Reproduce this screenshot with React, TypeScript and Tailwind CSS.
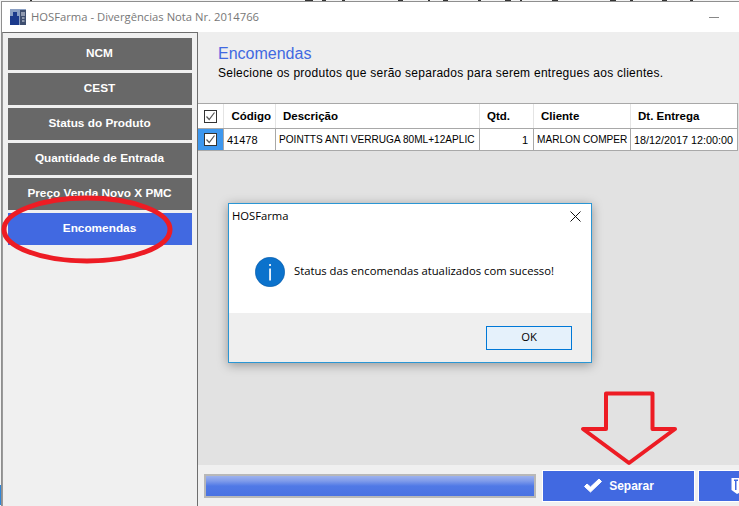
const sidebarItems = ['NCM', 'CEST', 'Status do Produto', 'Quantidade de Entrada', 'Preço Venda Novo X PMC']

function SmallCheck() {
  return (
    <div className="flex h-[13px] w-[13px] items-center justify-center border border-[#333] bg-white">
      <svg width="11" height="11" viewBox="0 0 11 11" fill="none">
        <path d="M1.5 5.5 4.2 8.5 9.5 1.5" stroke="#555" strokeWidth="1.2" />
      </svg>
    </div>
  )
}

function MessageDialog() {
  return (
    <div className="absolute left-[228px] top-[203px] flex h-[160px] w-[364px] flex-col border border-[#2a96d4] bg-white font-['Open_Sans',sans-serif] shadow-[0_2px_10px_rgba(0,0,0,0.35)]">
      <div className="flex h-[22px] items-center justify-between pl-[3px] pr-[10px] pt-[2px] text-[11.25px] text-black">
        <span>HOSFarma</span>
        <svg width="11" height="11" viewBox="0 0 11 11" fill="none">
          <path d="M0.5 0.5 10.5 10.5M10.5 0.5 0.5 10.5" stroke="#111" strokeWidth="1" />
        </svg>
      </div>
      <div className="flex h-[87px] items-center gap-[9px] pl-[26px] pt-[4px]">
        <svg width="30" height="30" viewBox="0 0 30 30">
          <circle cx="15" cy="15" r="14.7" fill="#0b72cc" stroke="#0a5ba6" strokeWidth="0.6" />
          <rect x="14.2" y="7" width="1.7" height="2" fill="#fff" />
          <rect x="14.2" y="11.5" width="1.7" height="12" fill="#fff" />
        </svg>
        <span className="text-[11.25px] text-black">Status das encomendas atualizados com sucesso!</span>
      </div>
      <div className="flex flex-1 items-center justify-end bg-[#efefef] pr-[19px]">
        <button className="h-[24px] w-[86px] border border-[#0078d7] bg-[#e5f1fb] text-[11.25px] text-black">OK</button>
      </div>
    </div>
  )
}

export default function App() {
  return (
    <div className="relative flex h-[506px] w-[739px] flex-col overflow-hidden bg-[#f4f4f4] font-['Liberation_Sans',sans-serif]">
      {/* bits of the window behind, top edge */}
      <svg className="shrink-0" width="739" height="1" viewBox="0 0 739 1">
        <path d="M30 0h2M305 0h8M322 0h4M342 0h3M398 0h5M428 0h2M443 0h5M478 0h3M505 0h6M520 0h2M552 0h6M610 0h6M630 0h3M662 0h5M690 0h3" stroke="#333" strokeWidth="2" />
      </svg>

      <div className="flex min-h-0 flex-1">
        <div className="flex w-px shrink-0 flex-col justify-end pb-px">
          <div className="h-[20px] bg-[#2f86d8]" />
        </div>

        <div className="flex min-w-0 flex-1 flex-col border-l border-t border-[#8f8f8f]">
          {/* title bar */}
          <div className="flex h-[30px] shrink-0 items-center justify-between bg-white pl-[8px] pr-[20px] font-['Open_Sans',sans-serif]">
            <div className="flex items-center gap-[5px]">
              <svg width="16" height="16" viewBox="0 0 16 16">
                <rect width="16" height="16" fill="#8ba0c4" />
                <path d="M0 7H3V3H7V7H9V16H0Z" fill="#1b3a8c" />
                <path d="M10 1H16V16H10Z" fill="#3f4f70" />
                <path d="M12 3V7M14 3V7M12 9H14.5M12 12H14.5" stroke="#e2e6ee" strokeWidth="1" />
              </svg>
              <span className="text-[11.25px] text-[#777]">HOSFarma - Divergências Nota Nr. 2014766</span>
            </div>
            <div className="h-px w-[10px] bg-[#888]" />
          </div>

          <div className="flex min-h-0 flex-1">
            {/* sidebar */}
            <div className="flex w-[196px] shrink-0 flex-col gap-[3px] border-l border-r border-t border-[#6e6e6e] border-l-[#9a9a9a] bg-[#f0f0f0] pl-[5px] pr-[5px] pt-[5px]">
              {sidebarItems.map((item) => (
                <div key={item} className="flex h-[32px] items-center justify-center pr-px bg-[#686868] text-[11.8px] font-bold text-white">
                  {item}
                </div>
              ))}
              <div className="flex h-[32px] items-center justify-center pr-px bg-[#4169e1] text-[11.8px] font-bold text-white">
                Encomendas
              </div>
            </div>

            {/* content */}
            <div className="flex min-w-0 flex-1 flex-col bg-[#e2e2e2]">
              <div className="h-[71px] shrink-0 bg-[#eeeeee] pl-[20px] pt-[12px]">
                <h1 className="text-[16px] leading-[19px] text-[#4169e1]">Encomendas</h1>
                <p className="mt-[1px] text-[12px] leading-[18px] tracking-[0.26px] text-black">
                  Selecione os produtos que serão separados para serem entregues aos clientes.
                </p>
              </div>

              <div className="mr-[1px] shrink-0 border-b border-r border-t border-[#a8a8a8] bg-white text-black">
                <div className="grid h-[25px] grid-cols-[26px_52px_204px_54px_97px_1fr] border-b border-[#a8a8a8] text-[11.5px] font-bold">
                  <div className="flex items-center justify-center border-r border-[#e4e4e4]">
                    <SmallCheck />
                  </div>
                  <div className="flex items-center justify-end border-r border-[#e4e4e4] pr-[4px] pt-px">Código</div>
                  <div className="flex items-center border-r border-[#e4e4e4] pl-[7px] pt-px">Descrição</div>
                  <div className="flex items-center border-r border-[#e4e4e4] pl-[7px] pt-px">Qtd.</div>
                  <div className="flex items-center border-r border-[#e4e4e4] pl-[7px] pt-px">Cliente</div>
                  <div className="flex items-center pl-[7px] pt-px">Dt. Entrega</div>
                </div>
                <div className="grid h-[21px] grid-cols-[26px_52px_204px_54px_97px_1fr] text-[10.1px]">
                  <div className="flex items-center justify-center border-r border-[#a8a8a8] bg-[#3d97ee]">
                    <SmallCheck />
                  </div>
                  <div className="flex items-center border-r border-[#a8a8a8] pl-[3px] pt-px text-[11px]">41478</div>
                  <div className="flex items-center whitespace-nowrap border-r border-[#a8a8a8] pl-[3px] pt-px">POINTTS ANTI VERRUGA 80ML+12APLIC</div>
                  <div className="flex items-center justify-end border-r border-[#a8a8a8] pr-[5px] pt-px text-[11px]">1</div>
                  <div className="flex items-center whitespace-nowrap border-r border-[#a8a8a8] pl-[3px] pt-px">MARLON COMPER</div>
                  <div className="flex items-center whitespace-nowrap pl-[3px] pt-px text-[10.8px]">18/12/2017 12:00:00</div>
                </div>
              </div>

              <div className="flex-1" />

              {/* footer */}
              <div className="flex h-[41px] shrink-0 items-start gap-[3px] bg-[#f0f0f0] pt-[5px]">
                <div className="ml-[6px] mr-[3px] mt-[4px] h-[24px] w-[332px] shrink-0 border-2 border-[#b8b8b8] bg-[linear-gradient(180deg,#9db2ee_0%,#7f9bea_25%,#5079e6_50%,#4a72e2_100%)]" />
                <button className="flex h-[32px] w-[153px] shrink-0 items-center justify-center gap-[6px] border border-white bg-[#4169e1] text-[12px] font-bold text-white">
                  <svg width="20" height="16" viewBox="0 0 20 16">
                    <path d="M1.5 8.5 7.5 14 18.5 3.5 16 1 7.5 9 4 6Z" fill="#fff" stroke="#fff" strokeLinejoin="round" />
                  </svg>
                  Separar
                </button>
                <button className="flex h-[32px] w-[60px] shrink-0 items-center border border-white bg-[#4169e1] pl-[32px]">
                  <svg width="12" height="18" viewBox="0 0 12 18">
                    <path d="M0.5 1H12V14L6 17 0.5 13Z" fill="#fff" />
                    <path d="M3 2.5H7V4H5.5V13H4V4H3Z" fill="#4169e1" />
                  </svg>
                </button>
              </div>
            </div>
          </div>
        </div>
      </div>

      <MessageDialog />

      {/* annotations drawn over the shot */}
      <svg className="pointer-events-none absolute left-0 top-0" width="739" height="506" viewBox="0 0 739 506" fill="none">
        <ellipse cx="87" cy="229.5" rx="83" ry="31.5" stroke="#ed1c24" strokeWidth="5" />
        <path d="M606 393.5H652.5V429H675L629 463 583 429H606Z" stroke="#ed1c24" strokeWidth="4" strokeLinejoin="round" />
      </svg>
    </div>
  )
}
